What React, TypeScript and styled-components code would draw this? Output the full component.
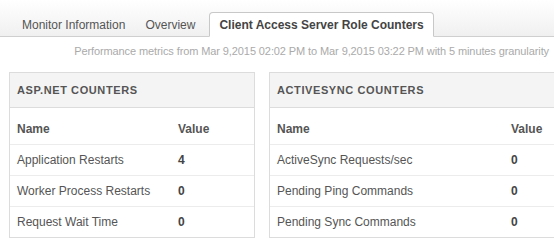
import styled, { createGlobalStyle } from "styled-components";

const Global = createGlobalStyle`
  body {
    margin: 0;
    font-family: "Liberation Sans", Arial, sans-serif;
    background: #fff;
    overflow: hidden;
  }
`;

const Page = styled.div`
  width: 554px;
  height: 252px;
  overflow: hidden;
`;

const TabBar = styled.div`
  height: 37px;
  display: flex;
  align-items: flex-end;
  padding-left: 12px;
  background: linear-gradient(#ffffff, #f0f0f0);
  border-bottom: 1px solid #cfcfcf;
  box-sizing: border-box;
`;

const Tab = styled.div<{ active?: boolean }>`
  height: 25px;
  line-height: 24px;
  padding: 0 9px;
  margin-left: ${(p) => (p.active ? "4px" : "0")};
  margin-bottom: -1px;
  font-size: 12px;
  box-sizing: border-box;
  color: ${(p) => (p.active ? "#444" : "#555")};
  font-weight: ${(p) => (p.active ? "bold" : "normal")};
  background: ${(p) => (p.active ? "#fff" : "transparent")};
  border: 1px solid ${(p) => (p.active ? "#c8c8c8" : "transparent")};
  border-bottom-color: ${(p) => (p.active ? "#fff" : "transparent")};
  border-radius: 4px 4px 0 0;
`;

const Subtitle = styled.div`
  text-align: right;
  padding-right: 5px;
  margin-top: 8px;
  font-size: 11px;
  letter-spacing: -0.1px;
  color: #aaa;
`;

const Panels = styled.div`
  display: flex;
  gap: 14px;
  padding-left: 9px;
  margin-top: 15px;
`;

const Panel = styled.div<{ width: number }>`
  width: ${(p) => p.width}px;
  flex-shrink: 0;
  border: 1px solid #dcdcdc;
  box-sizing: border-box;
`;

const PanelHeader = styled.div`
  height: 34px;
  line-height: 34px;
  padding-left: 7px;
  background: #f4f4f4;
  border-bottom: 1px solid #dcdcdc;
  font-size: 11px;
  font-weight: bold;
  letter-spacing: 0.6px;
  color: #555;
`;

const Row = styled.div<{ nameWidth: number; head?: boolean }>`
  display: grid;
  grid-template-columns: ${(p) => p.nameWidth}px 1fr;
  height: ${(p) => (p.head ? 31 : 30)}px;
  padding-top: ${(p) => (p.head ? 5 : 0)}px;
  box-sizing: content-box;
  align-items: center;
  padding-left: 7px;
  border-bottom: 1px solid #ececec;
  font-size: 12px;
  color: #555;
  font-weight: ${(p) => (p.head ? "bold" : "normal")};
  &:last-child {
    border-bottom: none;
  }
`;

const Value = styled.span`
  font-weight: bold;
  color: #444;
`;

type Counter = [string, number];

function CounterPanel({
  title,
  width,
  nameWidth,
  rows,
}: {
  title: string;
  width: number;
  nameWidth: number;
  rows: Counter[];
}) {
  return (
    <Panel width={width}>
      <PanelHeader>{title}</PanelHeader>
      <Row head nameWidth={nameWidth}>
        <span>Name</span>
        <span>Value</span>
      </Row>
      {rows.map(([name, val]) => (
        <Row key={name} nameWidth={nameWidth}>
          <span>{name}</span>
          <Value>{val}</Value>
        </Row>
      ))}
    </Panel>
  );
}

export default function App() {
  return (
    <Page>
      <Global />
      <TabBar>
        <Tab>Monitor Information</Tab>
        <Tab>Overview</Tab>
        <Tab active>Client Access Server Role Counters</Tab>
      </TabBar>
      <Subtitle>
        Performance metrics from Mar 9,2015 02:02 PM to Mar 9,2015 03:22 PM with 5 minutes granularity
      </Subtitle>
      <Panels>
        <CounterPanel
          title="ASP.NET COUNTERS"
          width={246}
          nameWidth={161}
          rows={[
            ["Application Restarts", 4],
            ["Worker Process Restarts", 0],
            ["Request Wait Time", 0],
          ]}
        />
        <CounterPanel
          title="ACTIVESYNC COUNTERS"
          width={360}
          nameWidth={234}
          rows={[
            ["ActiveSync Requests/sec", 0],
            ["Pending Ping Commands", 0],
            ["Pending Sync Commands", 0],
          ]}
        />
      </Panels>
    </Page>
  );
}
